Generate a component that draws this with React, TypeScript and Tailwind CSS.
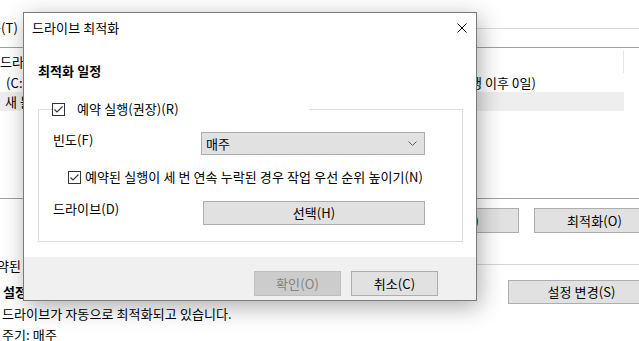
import React from 'react';

const CheckBox: React.FC = () => (
  <span className="flex h-[13px] w-[13px] shrink-0 items-center justify-center border border-[#333333] bg-white">
    <svg width="11" height="11" viewBox="0 0 11 11" fill="none">
      <path d="M1.5 5.5 L4 8 L9.5 2.5" stroke="#333333" strokeWidth="1.1" />
    </svg>
  </span>
);

const WinButton: React.FC<{ label: string; className?: string; disabled?: boolean }> = ({ label, className = '', disabled }) => (
  <div
    className={`flex items-center justify-center border leading-[16px] ${
      disabled ? 'border-[#bfbfbf] bg-[#cccccc] text-[#838383]' : 'border-[#adadad] bg-[#e1e1e1] text-black'
    } ${className}`}
  >
    {label}
  </div>
);

const OptimizeDialog: React.FC = () => (
  <div className="absolute left-[23px] top-[12px] flex h-[289px] w-[454px] flex-col border border-[#7a7a7a] bg-white shadow-[3px_6px_22px_rgba(0,0,0,0.32)]">
    {/* title bar */}
    <div className="flex h-[30px] shrink-0 items-center justify-between pl-[8px] pr-[9px]">
      <span className="leading-[16px]">드라이브 최적화</span>
      <svg width="10" height="10" viewBox="0 0 10 10" fill="none">
        <path d="M0.5 0.5 L9.5 9.5 M9.5 0.5 L0.5 9.5" stroke="#000" strokeWidth="1" />
      </svg>
    </div>

    {/* body */}
    <div className="flex-1 pl-[14px] pr-[13px]">
      <div className="mt-[20px] font-bold leading-[16px]">최적화 일정</div>

      <fieldset className="mt-[23px] border border-[#dcdcdc] pb-[16px] pl-[14px]">
        <legend className="-ml-[1px] flex h-[14px] w-[257px] items-center">
          <CheckBox />
          <span className="ml-[12px] leading-[14px]">예약 실행(권장)(R)</span>
        </legend>

        <div className="mt-[16px] flex items-start">
          <span className="w-[148px] leading-[16px]">빈도(F)</span>
          <div className="flex h-[23px] w-[224px] items-center justify-between border border-[#adadad] bg-[#e1e1e1] pl-[4px] pr-[7px]">
            <span className="leading-[16px]">매주</span>
            <svg width="9" height="5" viewBox="0 0 9 5" fill="none">
              <path d="M0.5 0.5 L4.5 4.5 L8.5 0.5" stroke="#606060" strokeWidth="1" />
            </svg>
          </div>
        </div>

        <div className="ml-[15px] mt-[14px] flex h-[16px] items-center">
          <CheckBox />
          <span className="ml-[4px] whitespace-nowrap leading-[16px]">
            예약된 실행이 세 번 연속 누락된 경우 작업 우선 순위 높이기(N)
          </span>
        </div>

        <div className="mt-[16px] flex items-start">
          <span className="w-[150px] leading-[16px]">드라이브(D)</span>
          <WinButton label="선택(H)" className="h-[24px] w-[222px]" />
        </div>
      </fieldset>
    </div>

    {/* footer */}
    <div className="flex h-[43px] shrink-0 justify-end gap-[10px] bg-[#f0f0f0] pr-[38px] pt-[14px]">
      <WinButton label="확인(O)" disabled className="h-[25px] w-[87px]" />
      <WinButton label="취소(C)" className="h-[25px] w-[87px]" />
    </div>
  </div>
);

export default function App() {
  return (
    <div className="relative h-[341px] w-[639px] overflow-hidden bg-white text-[13px] tracking-[0.1px] text-black font-['Noto_Sans_CJK_KR','Noto_Sans',sans-serif]">
      {/* main window behind the dialog */}
      <div className="w-[655px]">
        <div className="flex h-[48px] border-b border-[#a0a0a0]">
          <div className="w-[200px] pt-[20px]">
            <div className="flex w-[18px] justify-end overflow-hidden whitespace-nowrap leading-[16px]">도구(T)</div>
          </div>
          <div className="h-[29px] flex-1 border-b border-[#d9d9d9]" />
        </div>

        <div className="h-[151px] border-b border-[#a0a0a0]">
          <div className="flex h-[25px]">
            <div className="mt-[2px] flex h-[23px] w-[624px] items-center border-r border-[#e5e5e5] leading-[16px]">
              드라이브
            </div>
          </div>
          <div className="flex h-[19px] items-center leading-[16px]">
            <span className="w-[380px] pl-[6px]">(C:)</span>
            <span className="w-[156px] overflow-hidden whitespace-nowrap text-right">확인(마지막 실행 이후 0일)</span>
          </div>
          <div className="flex h-[19px] w-[624px] items-center bg-[#eeeeee] pl-[5px] leading-[16px]">새 볼륨 (D:)</div>
        </div>

        <div className="flex gap-[15px] pl-[398px] pt-[9px]">
          <WinButton label="분석(A)" className="h-[25px] w-[121px]" />
          <WinButton label="최적화(O)" className="h-[25px] w-[121px]" />
        </div>

        <div className="mt-[25px] flex">
          <span className="-ml-[15px] whitespace-nowrap leading-[16px]">예약된 최적화</span>
          <div className="ml-[6px] mt-[6px] flex-1 border-t border-[#d5d5d5]" />
        </div>

        <div className="mt-[6px] flex items-center">
          <span className="pl-[3px] font-bold leading-[16px]">설정</span>
          <WinButton label="설정 변경(S)" className="ml-auto h-[24px] w-[147px]" />
        </div>

        <div className="mt-[2px] pl-[2px] leading-[16px]">드라이브가 자동으로 최적화되고 있습니다.</div>
        <div className="mt-[5px] pl-[2px] leading-[16px]">주기: 매주</div>
      </div>

      <OptimizeDialog />
    </div>
  );
}
